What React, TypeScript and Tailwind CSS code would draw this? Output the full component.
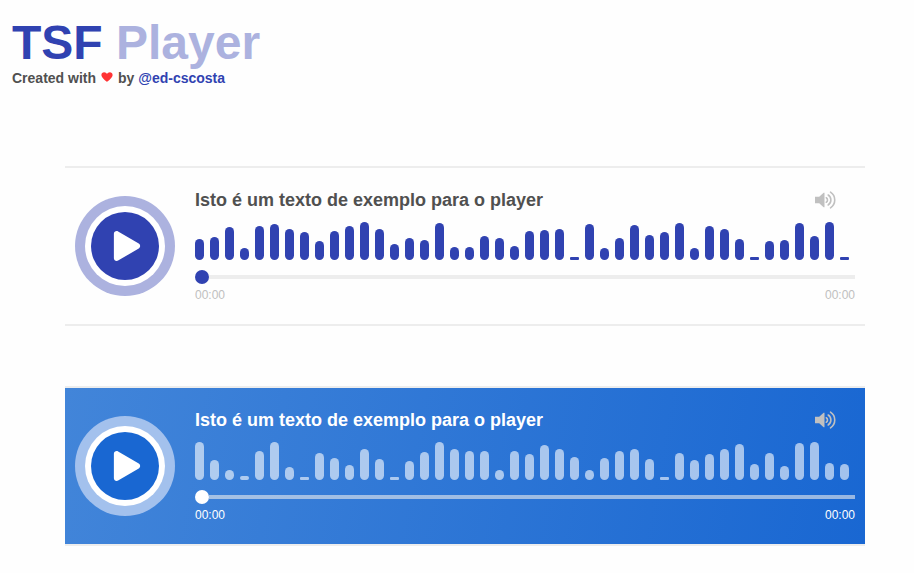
import React from "react";
import { FaPlay } from "react-icons/fa";

const indigoLevels = [
  21, 23, 33, 12, 34, 36, 31, 28, 19, 29, 34, 38, 31, 16, 22, 20, 37, 13, 13, 24, 22, 14,
  29, 30, 31, 3, 36, 12, 22, 35, 25, 28, 37, 12, 34, 31, 21, 3, 19, 20, 37, 24, 38, 3,
];

const blueLevels = [
  38, 20, 10, 4, 29, 38, 13, 3, 27, 22, 15, 31, 21, 3, 19, 28, 38, 31, 29, 29, 10, 29,
  26, 35, 31, 23, 10, 22, 29, 31, 21, 3, 27, 20, 26, 31, 36, 16, 27, 14, 37, 38, 17, 16,
];

interface Theme {
  card: string;
  ring: string;
  button: string;
  title: string;
  bar: string;
  track: string;
  thumb: string;
  time: string;
}

const light: Theme = {
  card: "",
  ring: "bg-[#acb2df]",
  button: "bg-[#3042b1]",
  title: "text-[#505050]",
  bar: "bg-[#3042b1]",
  track: "bg-[#ededed]",
  thumb: "bg-[#3042b1]",
  time: "text-[#c0c0c0]",
};

const blue: Theme = {
  card: "bg-[linear-gradient(100deg,#4285d9,#1967d2)]",
  ring: "bg-[#a3c1ed]",
  button: "bg-[#1967d2]",
  title: "text-white",
  bar: "bg-white/60",
  track: "bg-[#ededed]/60",
  thumb: "bg-white",
  time: "text-white",
};

function VolumeIcon() {
  return (
    <svg width="21" height="18" viewBox="0 0 21 18" className="text-[#c0c0c0]">
      <path d="M0 5.8h4.2L8.6 1.8h.9v14.4h-.9L4.2 12.2H0z" fill="currentColor" />
      <g fill="none" stroke="currentColor" strokeWidth="1.6" strokeLinecap="round">
        <path d="M11.3 6.8a2.6 2.6 0 0 1 0 4.4" />
        <path d="M13.2 4a6 6 0 0 1 0 10" />
        <path d="M15.5 1.2a9.3 9.3 0 0 1 0 15.6" />
      </g>
    </svg>
  );
}

function Heart() {
  return (
    <svg width="12" height="10" viewBox="0 0 12 10" className="mx-[5px] mb-[2px]">
      <path
        d="M6 10C4.6 8.7.4 6 .4 3.1.4 1.3 1.7.3 3.1.3 4.4.3 5.5 1 6 2.1 6.500 1 7.600.3 8.900.3c1.400 0 2.700 1 2.700 2.800C11.600 6 7.400 8.700 6 10z"
        fill="#ff3334"
      />
    </svg>
  );
}

function Player({ levels, theme }: { levels: number[]; theme: Theme }) {
  return (
    <section
      className={`flex h-[160px] w-[800px] items-center gap-5 border-y-2 border-[#ededed] px-2.5 ${theme.card}`}
    >
      <div className={`shrink-0 rounded-full p-2.5 ${theme.ring}`}>
        <div className="rounded-full bg-white p-1.5">
          <button
            aria-label="Play"
            className={`flex size-[68px] items-center justify-center rounded-full pl-1 text-white ${theme.button}`}
          >
            <FaPlay size={30} />
          </button>
        </div>
      </div>
      <div className="flex h-[112px] w-[660px] flex-col">
        <div className="flex h-5 items-center justify-between pr-[19px]">
          <h2 className={`text-[18px] leading-5 font-bold ${theme.title}`}>
            Isto é um texto de exemplo para o player
          </h2>
          <VolumeIcon />
        </div>
        <div className="mt-3 flex h-[38px] items-end gap-1.5">
          {levels.map((level, i) => (
            <div
              key={i}
              className={`w-[9px] ${level > 3 ? "rounded-[5px]" : "rounded-[1px]"} ${theme.bar}`}
              style={{ height: level }}
            />
          ))}
        </div>
        <div className="mt-2.5 flex h-3.5 items-center">
          <div className={`size-3.5 shrink-0 rounded-full ${theme.thumb}`} />
          <div className={`h-1 flex-1 ${theme.track}`} />
        </div>
        <div className={`mt-1 flex justify-between text-[12px] leading-[14px] ${theme.time}`}>
          <span>00:00</span>
          <span>00:00</span>
        </div>
      </div>
    </section>
  );
}

export default function App() {
  return (
    <main className="h-[573px] overflow-hidden bg-[#fefefe] font-['Liberation_Sans',Arial,sans-serif]">
      <header className="h-[166px] pt-[15px] pl-3">
        <h1 className="text-[48px] leading-[55px] font-bold text-[#acb2df]">
          <span className="text-[#3042b1]">TSF</span> Player
        </h1>
        <p className="flex items-center text-[14px] leading-4 font-bold text-[#505050]">
          Created with
          <Heart />
          by&nbsp;<a className="text-[#3042b1]">@ed-cscosta</a>
        </p>
      </header>
      <div className="flex flex-col gap-[60px] pl-[65px]">
        <Player levels={indigoLevels} theme={light} />
        <Player levels={blueLevels} theme={blue} />
      </div>
    </main>
  );
}
